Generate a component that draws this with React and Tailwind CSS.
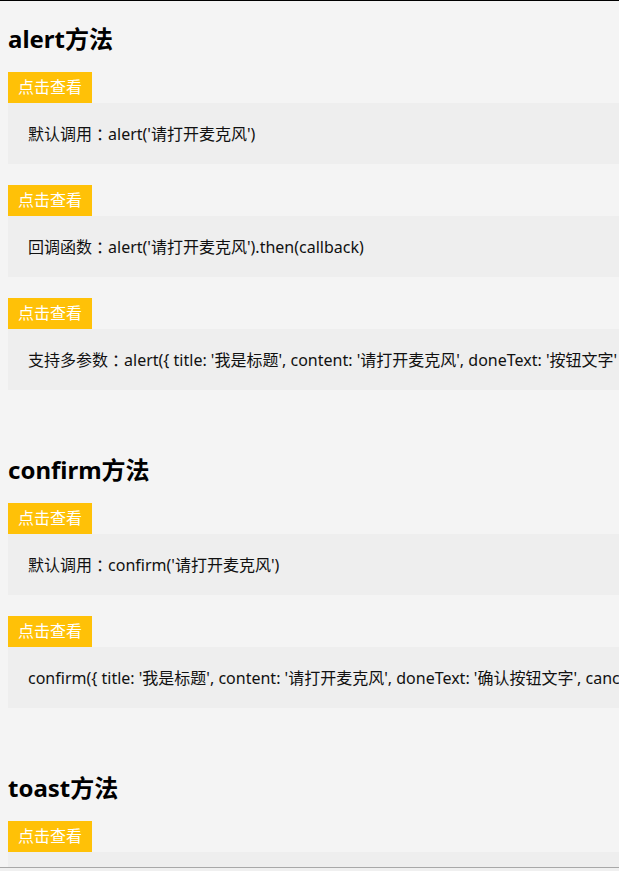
import React from "react";

const font = { fontFamily: '"Noto Sans", "Noto Sans CJK SC", sans-serif' };

function Label({ text }) {
  const idx = text.indexOf("：");
  if (idx < 0) return <>{text}</>;
  return (
    <>
      {text.slice(0, idx)}
      <span className="font-['Noto_Sans_CJK_TC',sans-serif]">：</span>
      {text.slice(idx + 1)}
    </>
  );
}

function Item({ text }) {
  return (
    <div className="mb-[21px] flex flex-col items-start">
      <button className="block h-[31px] bg-[#ffc107] px-[10px] text-[16px] leading-[31px] text-white">
        点击查看
      </button>
      <div className="flex h-[61px] w-full items-center whitespace-nowrap bg-[#eeeeee] pl-[20px] text-[16px] text-[#111]">
        <Label text={text} />
      </div>
    </div>
  );
}

function Section({ title, items, first }) {
  return (
    <section className={"flex flex-col " + (first ? "" : "mt-[41px]")}>
      <h2 className="mb-[15px] h-[36px] text-[24px] font-bold leading-[36px] text-black">{title}</h2>
      {items.map((t, i) => (
        <Item key={i} text={t} />
      ))}
    </section>
  );
}

export default function App() {
  return (
    <div className="flex h-[871px] w-[619px] flex-col overflow-hidden border-t border-black bg-[#f4f4f4]" style={font}>
      <div className="flex h-[867px] shrink-0 flex-col overflow-hidden border-b border-[#a8a8a8] pl-[8px] pt-[20px]">
        <Section
          first
          title="alert方法"
          items={[
            "默认调用：alert('请打开麦克风')",
            "回调函数：alert('请打开麦克风').then(callback)",
            "支持多参数：alert({ title: '我是标题', content: '请打开麦克风', doneText: '按钮文字' })",
          ]}
        />
        <Section
          title="confirm方法"
          items={[
            "默认调用：confirm('请打开麦克风')",
            "confirm({ title: '我是标题', content: '请打开麦克风', doneText: '确认按钮文字', cancelText: '取消按钮文字' })",
          ]}
        />
        <Section title="toast方法" items={["默认调用：toast('请打开麦克风')"]} />
      </div>
      <div className="flex-1 bg-[#f0f0f0]" />
    </div>
  );
}
